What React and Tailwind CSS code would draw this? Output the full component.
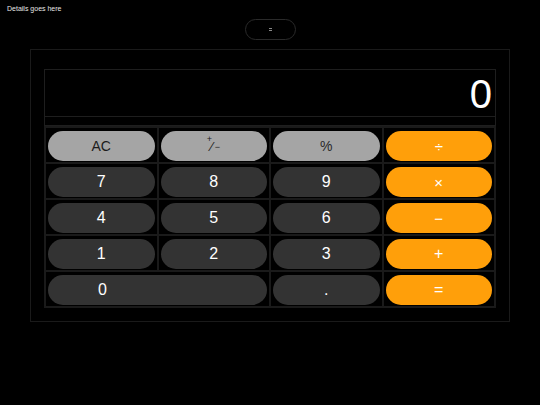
import React from "react";

const font = { fontFamily: '"Liberation Sans", Arial, sans-serif' };

function Btn({ label, kind, wide }) {
  const base =
    "h-[30px] w-full rounded-full flex items-center text-[16px] leading-none";
  const cls =
    kind === "light"
      ? "bg-[#a5a5a5] text-[#1c1c1c] justify-center"
      : kind === "op"
      ? "bg-[#ff9f0a] text-white justify-center"
      : wide
      ? "bg-[#333333] text-white justify-start pl-[50px]"
      : "bg-[#333333] text-white justify-center";
  return (
    <div
      className={`h-[36px] border border-[#1a1a1a] flex items-center px-[2px] pt-[2px] ${
        wide ? "col-span-2" : ""
      }`}
    >
      <div className={`${base} ${cls}`}>{label}</div>
    </div>
  );
}

export default function App() {
  const rows = [
    [
      { label: <span className="text-[14px]">AC</span>, kind: "light" },
      {
        label: (
          <span className="relative inline-block w-[14px] h-[16px] text-[13px]">
            <span className="absolute left-[0px] top-[-3px] text-[9px]">+</span>
            <span className="absolute left-[4px] top-[2px]">⁄</span>
            <span className="absolute left-[8px] top-[5px] text-[9px]">−</span>
          </span>
        ),
        kind: "light",
      },
      { label: <span className="text-[14px] text-[#2a2a2a]">%</span>, kind: "light" },
      { label: <span className="text-[15px]">÷</span>, kind: "op" },
    ],
    [
      { label: "7" },
      { label: "8" },
      { label: "9" },
      { label: <span className="text-[15px]">×</span>, kind: "op" },
    ],
    [
      { label: "4" },
      { label: "5" },
      { label: "6" },
      { label: <span className="text-[15px]">−</span>, kind: "op" },
    ],
    [
      { label: "1" },
      { label: "2" },
      { label: "3" },
      { label: <span className="text-[16px]">+</span>, kind: "op" },
    ],
    [
      { label: "0", wide: true },
      { label: "." },
      { label: <span className="text-[16px]">=</span>, kind: "op" },
    ],
  ];

  return (
    <div className="w-[540px] h-[405px] bg-black overflow-hidden" style={font}>
      <div className="h-[19px] pl-[7px] pt-[5px] text-[7px] leading-[8px] text-[#e6e6e6]">
        Details goes here
      </div>
      <div className="mx-auto w-[51px] h-[21px] rounded-full border border-[#2a2a2a] flex items-center justify-center">
        <div className="flex flex-col gap-[1px]">
          <div className="w-[3px] h-[1px] bg-[#8a8a8a]"></div>
          <div className="w-[3px] h-[1px] bg-[#8a8a8a]"></div>
        </div>
      </div>
      <div className="mt-[9px] ml-[30px] w-[480px] h-[273px] border border-[#1a1a1a] px-[13px] pt-[19px]">
        <div className="border border-[#1e1e1e] pb-[8px]">
          <div className="h-[47px] border-b border-[#1e1e1e] flex items-center justify-end pr-[3px] text-white text-[40px] leading-none pt-[1px]">
            0
          </div>
        </div>
        <div className="grid grid-cols-4 border border-[#1a1a1a]">
          {rows.flat().map((b, i) => (
            <Btn key={i} {...b} />
          ))}
        </div>
      </div>
    </div>
  );
}
